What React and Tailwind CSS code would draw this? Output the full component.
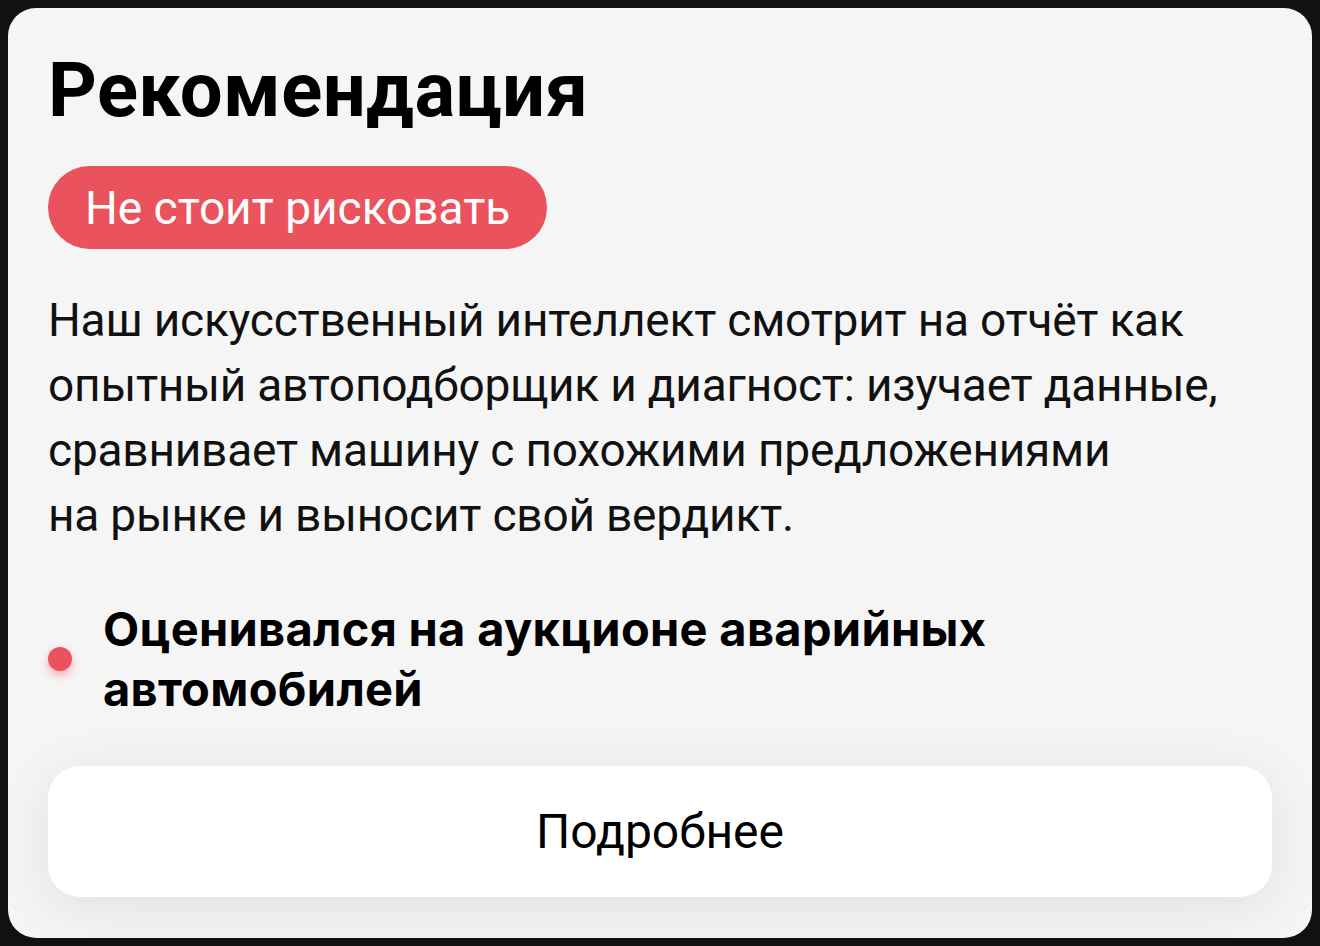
import React from 'react';

const font = { fontFamily: 'Roboto, "Noto Sans", sans-serif' };
const boldFont = { fontFamily: 'Inter, Roboto, sans-serif' };

const App = () => {
  return (
    <div className="w-[1320px] h-[946px] bg-[#111111] p-2" style={font}>
      <div className="relative h-full w-full overflow-hidden rounded-[28px] bg-[#f5f5f5] px-10 pt-[44px]">
        <h1 className="text-[76px] font-bold leading-none tracking-[0.4px] text-black">Рекомендация</h1>

        <div className="mt-[38px] inline-flex h-[83px] items-center rounded-full bg-[#ea535e] px-[37px] text-[46px] leading-none text-white">
          Не стоит рисковать
        </div>

        <p className="mt-[39px] max-w-[1190px] text-[46px] leading-[65px] tracking-[-0.2px] text-[#111111]">
          Наш искусственный интеллект смотрит на отчёт как опытный автоподборщик и диагност: изучает данные, сравнивает машину с похожими предложениями
          <br />
          на рынке и выносит свой вердикт.
        </p>

        <div className="mt-[51px] flex items-center gap-[31px]">
          <span className="h-[24px] w-[24px] shrink-0 rounded-full bg-[#ea535e] shadow-[0_4px_8px_rgba(234,83,94,0.45)]" />
          <p className="max-w-[1000px] text-[47px] font-bold leading-[60px] tracking-[0.3px] text-black" style={boldFont}>
            Оценивался на аукционе аварийных
            <br />
            автомобилей
          </p>
        </div>

        <button className="mt-[47px] flex h-[131px] w-full items-center justify-center rounded-[32px] bg-white text-[48px] text-black shadow-[0_10px_60px_rgba(0,0,0,0.09)]">
          Подробнее
        </button>
      </div>
    </div>
  );
};

export default App;
